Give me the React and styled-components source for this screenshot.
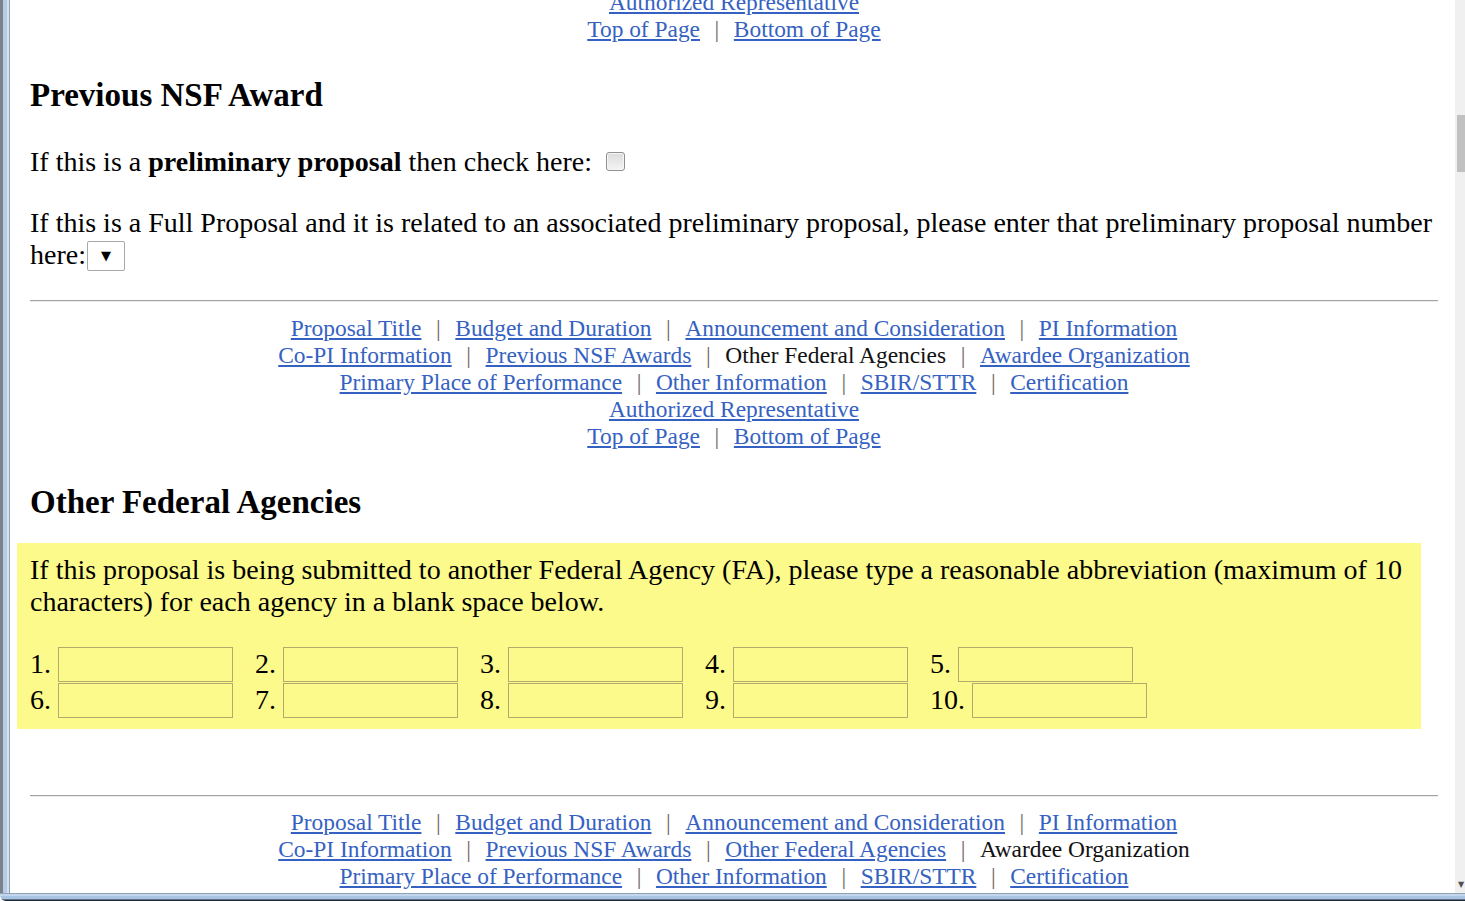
import React from "react";
import styled, { createGlobalStyle } from "styled-components";

const NAV_LINES = [
  ["Proposal Title", "Budget and Duration", "Announcement and Consideration", "PI Information"],
  ["Co-PI Information", "Previous NSF Awards", "Other Federal Agencies", "Awardee Organization"],
  ["Primary Place of Performance", "Other Information", "SBIR/STTR", "Certification"],
  ["Authorized Representative"],
  ["Top of Page", "Bottom of Page"],
];

const GlobalStyle = createGlobalStyle`
  html, body {
    margin: 0;
    padding: 0;
    overflow: hidden;
    background: #ffffff;
  }
`;

const SectionNav = ({ current, offset }) => (
  <NavBlock $offset={offset}>
    {NAV_LINES.map((line, i) => (
      <NavLine key={i}>
        {line.map((label, j) => (
          <React.Fragment key={label}>
            {j > 0 && <Separator>|</Separator>}
            {label === current ? (
              <CurrentItem>{label}</CurrentItem>
            ) : (
              <NavLink href="#">{label}</NavLink>
            )}
          </React.Fragment>
        ))}
      </NavLine>
    ))}
  </NavBlock>
);

const agencies = [1, 2, 3, 4, 5, 6, 7, 8, 9, 10];

export default function App() {
  return (
    <>
      <GlobalStyle />
      <Window>
        <MainRow>
          <LeftFrame />
          <Viewport>
            <Content>
              <SectionNav current="Previous NSF Awards" offset={-92} />

              <SectionHeading $top={34}>Previous NSF Award</SectionHeading>
              <Para $top={32}>
                If this is a <b>preliminary proposal</b> then check here:
                <CheckBox />
              </Para>
              <Para $top={29}>
                If this is a Full Proposal and it is related to an associated preliminary proposal, please
                enter that preliminary proposal number here:
                <SelectBox>▼</SelectBox>
              </Para>

              <Rule $top={29} />
              <SectionNav current="Other Federal Agencies" offset={13} />

              <SectionHeading $top={34}>Other Federal Agencies</SectionHeading>
              <Highlight>
                <BoxText>
                  If this proposal is being submitted to another Federal Agency (FA), please type a
                  reasonable abbreviation (maximum of 10 characters) for each agency in a blank space below.
                </BoxText>
                <AgencyGrid>
                  {agencies.map((n) => (
                    <AgencyCell key={n}>
                      <AgencyLabel>{n}.</AgencyLabel>
                      <AgencyInput type="text" maxLength={10} />
                    </AgencyCell>
                  ))}
                </AgencyGrid>
              </Highlight>

              <Rule $top={66} />
              <SectionNav current="Awardee Organization" offset={12.5} />
            </Content>
          </Viewport>
          <Scrollbar>
            <Thumb />
            <ScrollArrow>▼</ScrollArrow>
          </Scrollbar>
        </MainRow>
        <BottomFrame />
      </Window>
    </>
  );
}

const Window = styled.div`
  width: 1465px;
  height: 901px;
  display: grid;
  grid-template-rows: 1fr 8px;
  overflow: hidden;
  font-family: "Liberation Serif", "Times New Roman", serif;
  color: #000;
`;

const MainRow = styled.div`
  display: flex;
  min-height: 0;
`;

const LeftFrame = styled.div`
  width: 10px;
  flex-shrink: 0;
  background: linear-gradient(
    to right,
    #7b828c 0 3px,
    #b7cbe4 3px 7px,
    #d3e1f1 7px 9px,
    #93a3b7 9px 10px
  );
`;

const Viewport = styled.div`
  flex: 1;
  overflow: hidden;
  background: #ffffff;
`;

const Content = styled.div`
  padding: 0 17px 0 20px;
`;

const NavBlock = styled.nav`
  margin-top: ${(p) => p.$offset}px;
  font-size: 23.4px;
  line-height: 27px;
  text-align: center;
`;

const NavLine = styled.div`
  white-space: nowrap;
`;

const NavLink = styled.a`
  color: #3562c2;
  text-decoration: underline;
  text-underline-offset: 2px;
`;

const CurrentItem = styled.span`
  color: #111;
`;

const Separator = styled.span`
  display: inline-block;
  padding: 0 14.6px;
  color: #6f6660;
`;

const SectionHeading = styled.h3`
  margin: ${(p) => p.$top}px 0 0;
  font-size: 33px;
  line-height: 37px;
  font-weight: bold;
`;

const Para = styled.p`
  margin: ${(p) => p.$top}px 0 0;
  font-size: 28px;
  line-height: 32px;
`;

const CheckBox = styled.span`
  display: inline-block;
  width: 17px;
  height: 17px;
  margin-left: 14px;
  vertical-align: 0;
  border: 1px solid #8e8f8f;
  border-radius: 3px;
  background: linear-gradient(to bottom, #dcdcdc, #f4f4f4);
  box-shadow: inset 0 0 0 1px #f6f6f6;
`;

const SelectBox = styled.span`
  display: inline-block;
  box-sizing: border-box;
  width: 38px;
  height: 30px;
  margin-left: 1px;
  vertical-align: bottom;
  border: 1px solid #a9a9a9;
  border-radius: 2px;
  background: #fff;
  font-family: "DejaVu Sans", sans-serif;
  font-size: 13px;
  line-height: 28px;
  text-align: center;
  color: #000;
`;

const Rule = styled.hr`
  margin: ${(p) => p.$top}px 0 0;
  height: 0;
  border: 0;
  border-top: 1px solid #a3a3a3;
  border-bottom: 1px solid #ececec;
`;

const Highlight = styled.div`
  margin: 21.5px 0 0 -13px;
  width: 1404px;
  box-sizing: border-box;
  padding: 11px 13px 11px;
  background: #fdfa8c;
`;

const BoxText = styled.p`
  margin: 0;
  font-size: 28px;
  line-height: 32px;
  max-width: 1390px;
`;

const AgencyGrid = styled.div`
  margin-top: 29px;
  display: grid;
  grid-template-columns: repeat(5, 225px);
  row-gap: 1px;
`;

const AgencyCell = styled.div`
  display: flex;
  align-items: center;
  gap: 7px;
  height: 35px;
`;

const AgencyLabel = styled.span`
  font-size: 28px;
  line-height: 32px;
`;

const AgencyInput = styled.input`
  box-sizing: border-box;
  width: 175px;
  height: 35px;
  margin: 0;
  padding: 2px 4px;
  border: 1px solid #b3aa6c;
  background: transparent;
  font-family: "Liberation Serif", serif;
  font-size: 20px;
  outline: none;
`;

const Scrollbar = styled.div`
  position: relative;
  width: 10px;
  flex-shrink: 0;
  background: #f0f0f0;
`;

const Thumb = styled.div`
  position: absolute;
  top: 115px;
  left: 2px;
  right: 0;
  height: 57px;
  background: #c1c1c1;
`;

const ScrollArrow = styled.span`
  position: absolute;
  bottom: 4px;
  left: 3px;
  font-family: "DejaVu Sans", sans-serif;
  font-size: 8px;
  line-height: 8px;
  color: #505050;
`;

const BottomFrame = styled.div`
  background: linear-gradient(
    to bottom,
    #8ea3bb 0 1px,
    #c4d6ec 1px 3px,
    #a9c3e3 3px 6px,
    #5d6f84 6px 7px,
    #1f2a36 7px 8px
  );
  border-bottom-left-radius: 6px;
`;
